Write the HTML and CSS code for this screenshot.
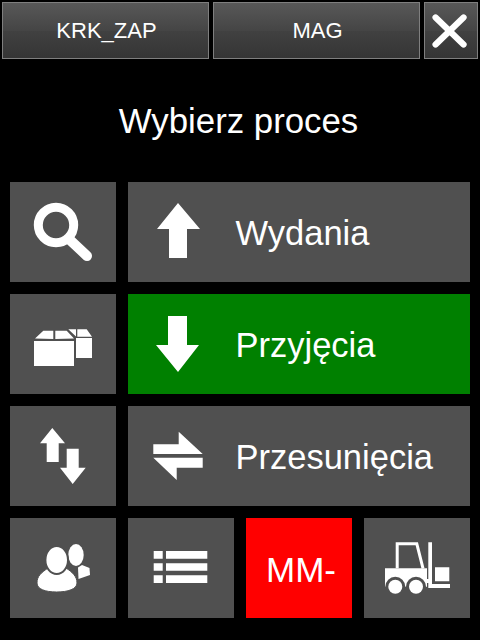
FILE: index.html
```html
<!DOCTYPE html>
<html lang="en">
<head>
  <meta charset="UTF-8" />
  <meta name="viewport" content="width=device-width, initial-scale=1.0" />
  <title>Wybierz proces</title>
  <link rel="stylesheet" href="styles.css">
</head>
<body>

  <header class="top-bar">
    <button class="top-btn">KRK_ZAP</button>
    <button class="top-btn">MAG</button>
    <button class="top-btn close">
      <svg width="54" height="57" viewBox="0 0 54 57"><path d="M11 15 L40 43 M40 15 L11 43" stroke="#fff" stroke-width="6.5" stroke-linecap="round" fill="none"/></svg>
    </button>
  </header>

  <h1 class="title">Wybierz proces</h1>

  <main class="menu">
    <button class="tile">
      <svg class="icon" viewBox="0 0 106 100"><circle cx="46" cy="43" r="17.7" fill="none" stroke="#fff" stroke-width="9"/><path d="M60 58 L77 74" stroke="#fff" stroke-width="10" stroke-linecap="round"/></svg>
    </button>
    <button class="tile wide">
      <svg class="icon" viewBox="0 0 106 100"><path d="M50 21 L72 47 H59 V76 H41 V47 H29 Z" fill="#fff"/></svg>
      <span class="label">Wydania</span>
    </button>

    <button class="tile">
      <svg class="icon" viewBox="0 0 106 100">
        <path d="M24 47 H64 V72 H24 Z M66 44 H82 V64 H66 Z" fill="#fff"/>
        <path d="M25 44.5 L33.3 36.7 H43.3 V45 Z M45.3 45 V36.7 H56.7 L64 44.5 Z M58.3 35.3 H66 V42.5 Z M67.3 35.3 H76.7 L82 42.7 H67.3 Z" fill="#fff"/>
      </svg>
    </button>
    <button class="tile wide green">
      <svg class="icon" viewBox="0 0 106 100"><path d="M40 22 H59 V51 H71 L50 78 L28 51 H40 Z" fill="#fff"/></svg>
      <span class="label">Przyjęcia</span>
    </button>

    <button class="tile">
      <svg class="icon" viewBox="0 0 106 100"><path d="M42.3 22 L55 37.3 H48.7 V56 H36.7 V37.3 H30 Z M56.7 42.7 H68.7 V61.7 H75.7 L62.7 78 L50 61.7 H56.7 Z" fill="#fff"/></svg>
    </button>
    <button class="tile wide">
      <svg class="icon" viewBox="0 0 106 100"><path d="M25.3 38.3 H50.7 V25.7 L74.7 48 H25.3 Z M25.3 51.7 H74.7 V61.7 H48.7 V74 Z" fill="#fff"/></svg>
      <span class="label">Przesunięcia</span>
    </button>

    <button class="tile">
      <svg class="icon" viewBox="0 0 106 100">
        <ellipse cx="66" cy="37" rx="7.7" ry="11" fill="#fff"/>
        <path d="M68 49.5 L72 47 L79.5 50 L80 57 L68.5 61 Z" fill="#fff"/>
        <path d="M27 65 C27 58 31 55 38 50 H56 C62 54 67 58 67 65 C67 71 58 74 46.7 74 C35 74 27 71 27 65 Z" fill="#fff" stroke="#505050" stroke-width="1"/>
        <ellipse cx="46.7" cy="42" rx="11.3" ry="14" fill="#fff" stroke="#505050" stroke-width="2"/>
      </svg>
    </button>
    <button class="tile">
      <svg class="icon" viewBox="0 0 106 100"><path d="M25.7 33 H34.7 V40.7 H25.7 Z M38 33 H79.3 V40.7 H38 Z M25.7 45.3 H34.7 V52.7 H25.7 Z M38 45.3 H79.3 V52.7 H38 Z M25.7 57.3 H34.7 V65 H25.7 Z M38 57.3 H79.3 V65 H38 Z" fill="#fff"/></svg>
    </button>
    <button class="tile red"><span class="label-small">MM-</span></button>
    <button class="tile">
      <svg class="icon" viewBox="0 0 106 100">
        <path d="M33.2 50.3 V25.8 H52.8 L59 50.3" fill="none" stroke="#fff" stroke-width="3"/>
        <path d="M21 50.3 H63 V68.7 H21 Z" fill="#fff"/>
        <circle cx="31.3" cy="68.7" r="10" fill="#505050"/>
        <circle cx="52" cy="68.7" r="10" fill="#505050"/>
        <path d="M19 69 H64 V80 H19 Z" fill="#505050"/>
        <circle cx="31.3" cy="68.7" r="7" fill="#fff"/>
        <circle cx="52" cy="68.7" r="7" fill="#fff"/>
        <path d="M64.3 24.3 H68 V66 H86 V70 H64.3 Z M71 49.3 H85.3 V63.3 H71 Z M62 61 H65 V65 H62 Z" fill="#fff"/>
      </svg>
    </button>
  </main>

</body>
</html>
```

FILE: styles.css
```css
body {
  margin: 0;
  width: 480px;
  height: 640px;
  overflow: hidden;
  background: #000;
  color: #fff;
  font-family: "Liberation Sans", Arial, sans-serif;
}

button {
  font-family: inherit;
  color: #fff;
  padding: 0;
}

.top-bar {
  display: flex;
  gap: 4px;
  padding: 2px 2px 0;
}

.top-btn {
  width: 207px;
  height: 57px;
  box-sizing: border-box;
  border: 1px solid #7f7f7f;
  padding-left: 2px;
  background: linear-gradient(#585858, #454545 50%, #414141 50%, #353535);
  font-size: 22px;
}

.top-btn.close {
  width: 54px;
  padding: 0;
  display: flex;
  align-items: center;
  justify-content: center;
}

.title {
  height: 123px;
  margin: 0;
  padding-right: 3px;
  display: flex;
  align-items: center;
  justify-content: center;
  font-size: 34.8px;
  font-weight: normal;
}

.menu {
  display: grid;
  grid-template-columns: repeat(4, 106px);
  grid-auto-rows: 100px;
  gap: 12px;
  padding-left: 10px;
}

.tile {
  display: flex;
  align-items: center;
  justify-content: center;
  border: none;
  background: #505050;
}

.tile.wide {
  grid-column: span 3;
  justify-content: flex-start;
}

.tile.green {
  background: #008000;
}

.tile.red {
  background: #f00;
}

.icon {
  width: 106px;
  height: 100px;
  flex: none;
}

.label {
  font-size: 34.5px;
  margin: 2px 0 0 1.5px;
}

.label-small {
  font-size: 35px;
  margin: 3px 0 0 4px;
}
```
